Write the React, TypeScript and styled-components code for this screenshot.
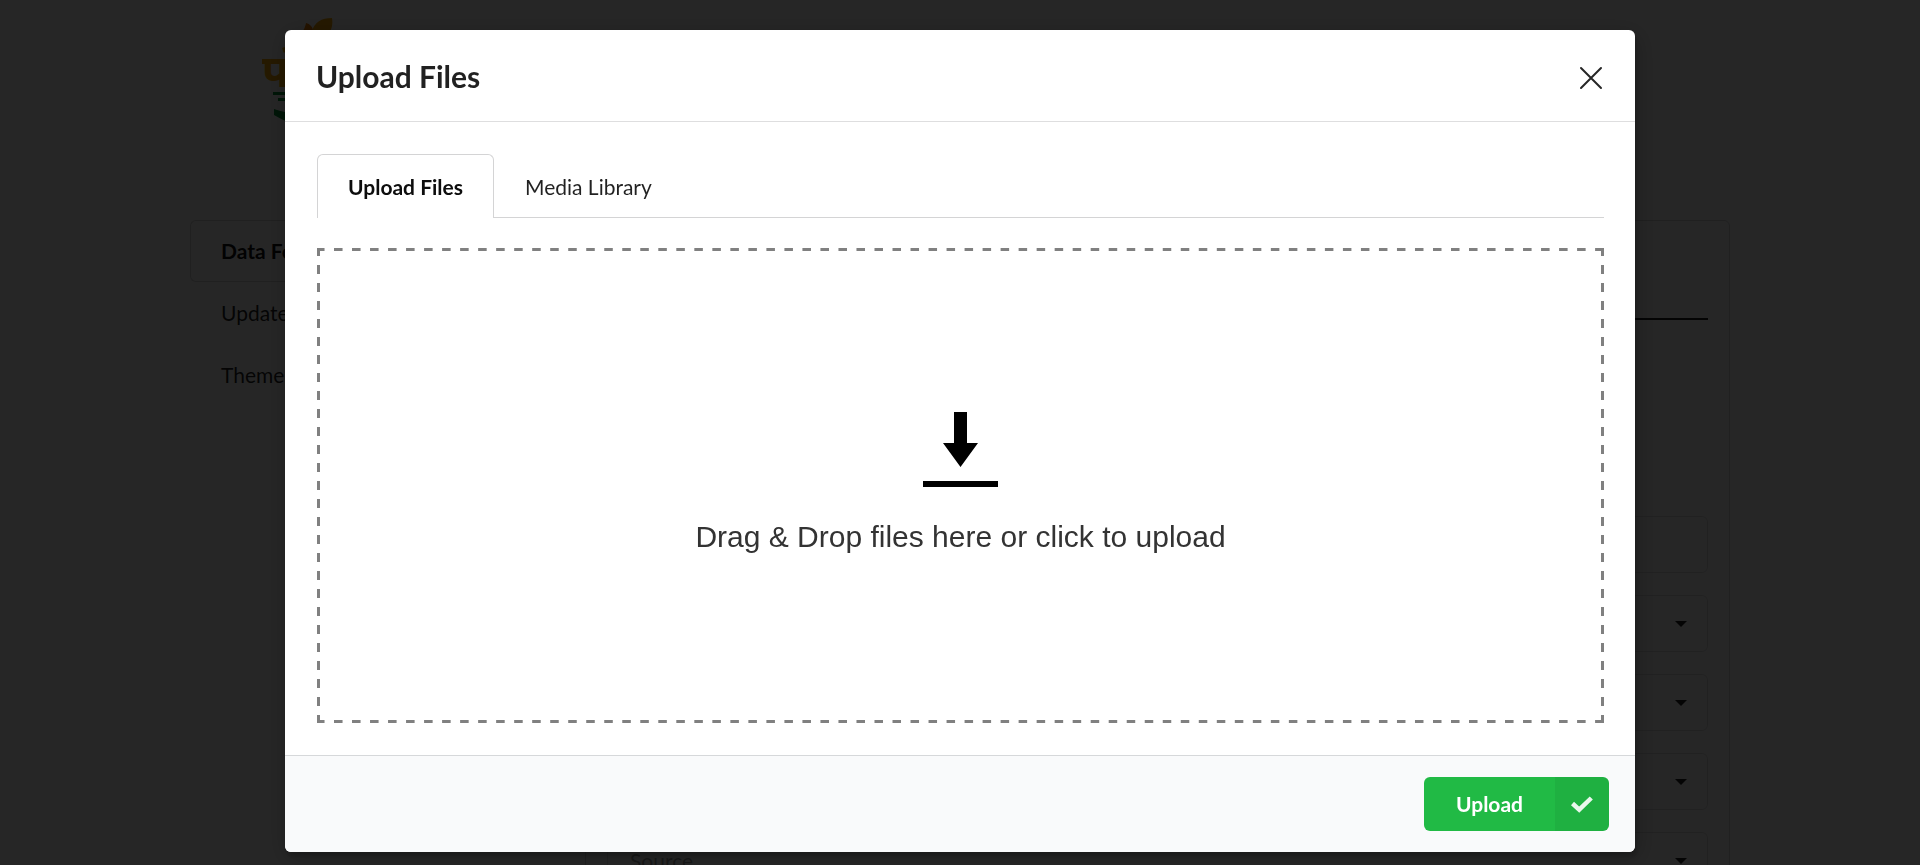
import React, { useState } from "react";
import styled, { createGlobalStyle } from "styled-components";

const GlobalStyle = createGlobalStyle`
  *, *::before, *::after { box-sizing: border-box; }
  body {
    margin: 0;
    background: #fff;
    color: rgba(0, 0, 0, 0.87);
    font: 21px/30px Lato, "Liberation Sans", sans-serif;
  }
  button, input, select { font: inherit; color: inherit; }
`;

const Screen = styled.div`
  height: 100vh;
  overflow: hidden;
`;

const Page = styled.div`
  max-width: 1540px;
  margin: 0 auto;
`;

const Masthead = styled.header`
  height: 220px;
  padding: 16px 72px;
`;

const Columns = styled.div`
  display: grid;
  grid-template-columns: 395px 1fr;
`;

const SideMenu = styled.nav`
  display: flex;
  flex-direction: column;
`;

const SideLink = styled.a<{ $active?: boolean }>`
  height: 62px;
  padding: 15px 30px;
  border: 1px solid ${(p) => (p.$active ? "#d4d4d5" : "transparent")};
  border-right: 0;
  border-radius: 6px 0 0 6px;
  color: ${(p) => (p.$active ? "rgba(0, 0, 0, 0.95)" : "rgba(0, 0, 0, 0.87)")};
  font-weight: ${(p) => (p.$active ? 700 : 400)};
  text-decoration: none;
`;

const Panel = styled.main`
  padding: 97px 21px 60px;
  border: 1px solid #d4d4d5;
  border-radius: 0 6px 6px 0;
`;

const Rule = styled.hr`
  margin: 0 0 196px;
  border: 0;
  border-top: 2px solid #1b1c1d;
`;

const Fields = styled.form`
  display: grid;
  gap: 22px;
`;

const Field = styled.label`
  position: relative;
  display: block;
  height: 57px;
`;

const TextInput = styled.input`
  width: 100%;
  height: 57px;
  padding: 0 22px;
  border: 1px solid #dededf;
  border-radius: 6px;
  background: #fff;
`;

const Select = styled.select`
  width: 100%;
  height: 57px;
  padding: 0 22px;
  appearance: none;
  border: 1px solid #dededf;
  border-radius: 6px;
  background: #fff;
  color: rgba(0, 0, 0, 0.4);
`;

const Caret = styled.svg`
  position: absolute;
  right: 21px;
  top: 26px;
`;

const Dimmer = styled.div`
  position: fixed;
  inset: 0;
  display: flex;
  align-items: flex-start;
  justify-content: center;
  padding: 30px 0;
  overflow: hidden;
  background: rgba(0, 0, 0, 0.85);
`;

const Dialog = styled.section`
  width: 88%;
  max-width: 1350px;
  overflow: hidden;
  border-radius: 6px;
  background: #fff;
  box-shadow: 2px 5px 5px 0 rgba(0, 0, 0, 0.2), 2px 5px 23px 3px rgba(0, 0, 0, 0.2);
`;

const DialogHeader = styled.header`
  display: flex;
  align-items: center;
  justify-content: space-between;
  height: 92px;
  padding: 0 28px 0 31px;
  border-bottom: 1px solid #dededf;
`;

const Title = styled.h2`
  margin: 0;
  font-size: 30px;
  line-height: 38px;
`;

const CloseButton = styled.button`
  display: flex;
  padding: 6px 4px 2px;
  border: 0;
  background: none;
  cursor: pointer;
`;

const DialogBody = styled.div`
  padding: 32px 31px 32px 32px;
`;

const Tabs = styled.div`
  display: flex;
  margin-bottom: 30px;
  border-bottom: 1px solid #d4d4d5;
`;

const Tab = styled.button<{ $active: boolean }>`
  height: 64px;
  margin-bottom: -1px;
  padding: 0 30px;
  border: 1px solid ${(p) => (p.$active ? "#d4d4d5" : "transparent")};
  border-bottom: 0;
  border-radius: 6px 6px 0 0;
  background: ${(p) => (p.$active ? "#fff" : "none")};
  color: ${(p) => (p.$active ? "rgba(0, 0, 0, 0.95)" : "rgba(0, 0, 0, 0.87)")};
  font-weight: ${(p) => (p.$active ? 700 : 400)};
  cursor: pointer;
`;

const dashRow = "linear-gradient(to right, gray 50%, transparent 50%)";
const dashColumn = "linear-gradient(to bottom, gray 50%, transparent 50%)";

const DropZone = styled.label`
  display: flex;
  flex-direction: column;
  align-items: center;
  justify-content: center;
  gap: 30px;
  height: 475px;
  padding-bottom: 2px;
  background-image: ${dashRow}, ${dashRow}, ${dashColumn}, ${dashColumn};
  background-size: calc((100% - 7px) / 71) 3px, calc((100% - 7px) / 71) 3px, 3px 18px, 3px 18px;
  background-position: -1px 0, -1px 100%, 0 -1px, 100% -1px;
  background-repeat: repeat-x, repeat-x, repeat-y, repeat-y;
  color: #333;
  font: 30px/40px "Liberation Sans", Arial, sans-serif;
  cursor: pointer;
`;

const FileInput = styled.input`
  position: absolute;
  width: 1px;
  height: 1px;
  opacity: 0;
`;

const Actions = styled.footer`
  display: flex;
  justify-content: flex-end;
  padding: 21px 26px 21px 32px;
  border-top: 1px solid #d6d8da;
  background: #f9fafb;
`;

const UploadButton = styled.button`
  display: flex;
  height: 54px;
  padding: 0;
  overflow: hidden;
  border: 0;
  border-radius: 6px;
  background: #21ba45;
  color: #fff;
  font-weight: 700;
  cursor: pointer;
`;

const ButtonText = styled.span`
  padding: 12px 32px;
`;

const ButtonIcon = styled.span`
  display: flex;
  align-items: center;
  justify-content: center;
  width: 54px;
  height: 54px;
  background: rgba(0, 0, 0, 0.05);
`;

const Logo = () => (
  <svg width="100" height="112" viewBox="0 0 100 112" aria-label="Logo" role="img">
    <path d="M50 15C53 6 59 2 70 2C71 8 70 13 66 20L46 26Z" fill="#f7a600" />
    <path d="M44 7C48 8 51 11 51 15L46 24L38 20C40 16 43 13 44 7Z" fill="#ef7d00" />
    <text x="0" y="71" fill="#f7a600" fontSize="44" fontWeight="700" fontFamily="Noto Sans, sans-serif">पो</text>
    <path d="M11 76H60V79H11ZM16 82H60V85H16ZM12 93Q22 97 40 98V112Q24 106 12 99Z" fill="#008f32" />
  </svg>
);

const choices = ["Type", "Category", "Language", "Source"];

export default function App() {
  const [tab, setTab] = useState("Upload Files");
  return (
    <>
      <GlobalStyle />
      <Screen>
        <Page>
          <Masthead><Logo /></Masthead>
          <Columns>
            <SideMenu>
              <SideLink href="#data" $active>Data Form</SideLink>
              <SideLink href="#updates">Updates</SideLink>
              <SideLink href="#themes">Themes</SideLink>
            </SideMenu>
            <Panel>
              <Rule />
              <Fields>
                <Field><TextInput aria-label="Title" /></Field>
                {choices.map((name) => (
                  <Field key={name}>
                    <Select aria-label={name}><option>{name}</option></Select>
                    <Caret width="12" height="6" viewBox="0 0 12 6"><path d="M0 0H12L6 6Z" fill="#1b1c1d" /></Caret>
                  </Field>
                ))}
              </Fields>
            </Panel>
          </Columns>
        </Page>
      </Screen>
      <Dimmer>
        <Dialog role="dialog" aria-modal="true" aria-labelledby="dialog-title">
          <DialogHeader>
            <Title id="dialog-title">Upload Files</Title>
            <CloseButton type="button" aria-label="Close">
              <svg width="24" height="24" viewBox="0 0 24 24" stroke="#262626" strokeWidth="2" strokeLinecap="round">
                <path d="M2 2L22 22M22 2L2 22" />
              </svg>
            </CloseButton>
          </DialogHeader>
          <DialogBody>
            <Tabs role="tablist">
              {["Upload Files", "Media Library"].map((name) => (
                <Tab key={name} type="button" role="tab" aria-selected={tab === name} $active={tab === name} onClick={() => setTab(name)}>
                  {name}
                </Tab>
              ))}
            </Tabs>
            <DropZone>
              <FileInput type="file" multiple />
              <svg width="75" height="75" viewBox="0 0 75 75" aria-hidden="true">
                <path d="M31 0H44V31H55L37.500 55L20 31H31ZM0 69H75V75H0Z" />
              </svg>
              Drag &amp; Drop files here or click to upload
            </DropZone>
          </DialogBody>
          <Actions>
            <UploadButton type="button">
              <ButtonText>Upload</ButtonText>
              <ButtonIcon>
                <svg width="22" height="17" viewBox="0 0 22 17" fill="none" stroke="#fff" strokeOpacity="0.9" strokeWidth="4.500" aria-hidden="true">
                  <path d="M1.500 7.500L8.200 13.600L20.300 2" />
                </svg>
              </ButtonIcon>
            </UploadButton>
          </Actions>
        </Dialog>
      </Dimmer>
    </>
  );
}
